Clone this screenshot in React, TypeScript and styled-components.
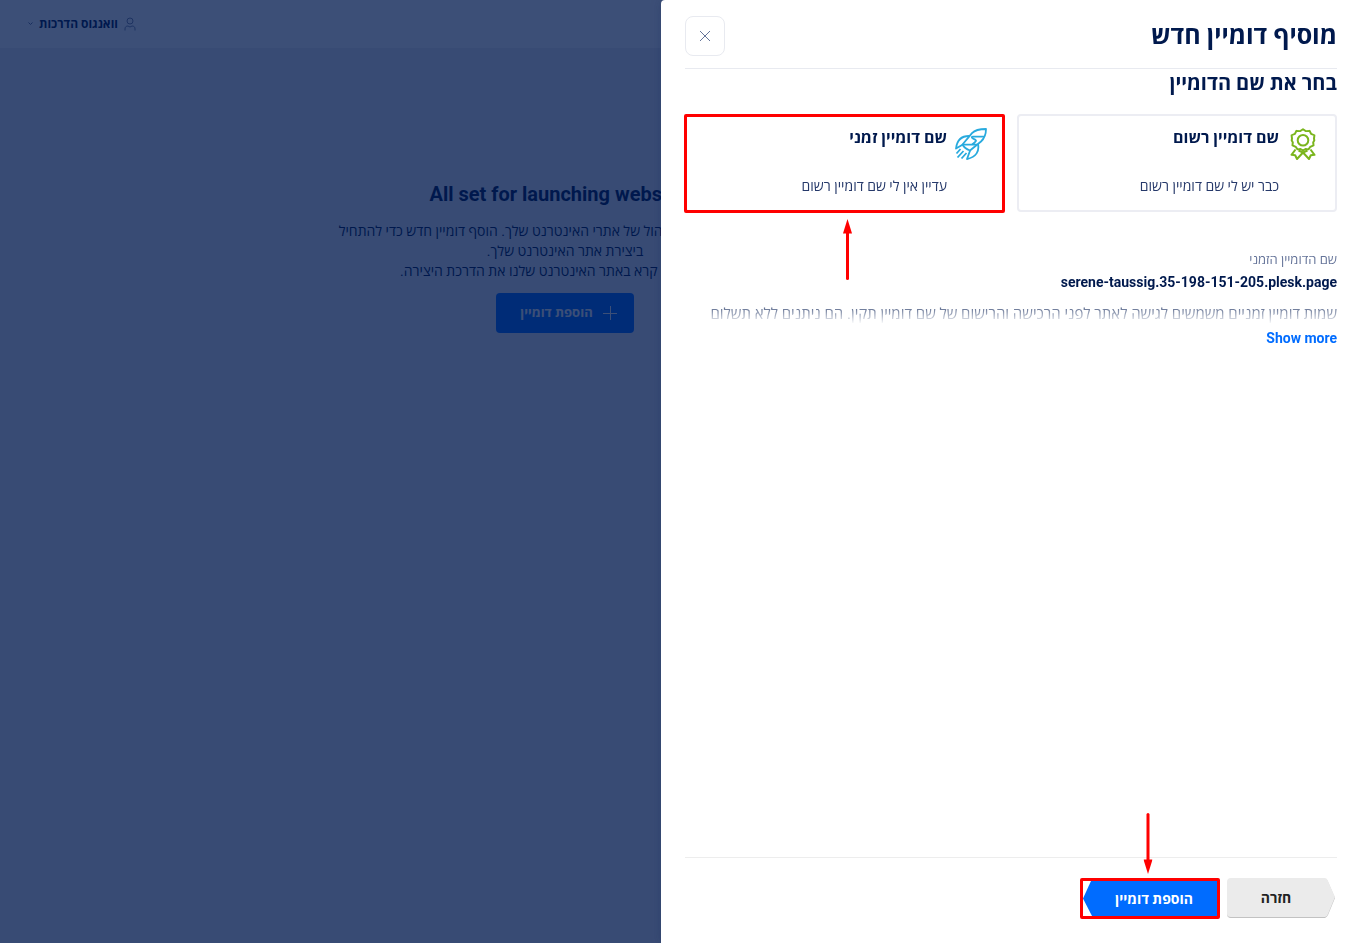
import React from "react";
import styled, { createGlobalStyle } from "styled-components";

const ink = "#00194d";
const red = "#ff0000";

const GlobalStyle = createGlobalStyle`
  * { box-sizing: border-box; }
  html, body, #root { height: 100%; }
  body {
    margin: 0;
    background: #eeeef2;
    color: ${ink};
    font-family: Roboto, "Open Sans", "Liberation Sans", sans-serif;
    font-size: 14px;
    line-height: 20px;
    overflow: hidden;
  }
  h1, h2, h3, p { margin: 0; }
  button { font: inherit; color: inherit; cursor: pointer; }
`;

const Page = styled.div`
  min-height: 100%;
  display: grid;
  grid-template-columns: 228px 1fr;
`;

const Sidebar = styled.aside`
  background: #ffffff;
`;

const TopBar = styled.header`
  display: flex;
  justify-content: flex-end;
  align-items: center;
  height: 48px;
  padding: 0 28px;
  background: #ffffff;
`;

const UserButton = styled.button`
  display: flex;
  align-items: center;
  gap: 6px;
  padding: 0;
  border: 0;
  background: none;
  font-size: 12px;
  font-weight: 700;
`;

const Intro = styled.section`
  display: flex;
  flex-direction: column;
  align-items: center;
  padding-top: 132px;
  text-align: center;
`;

const IntroTitle = styled.h2`
  font-size: 20px;
  line-height: 28px;
  font-weight: 700;
`;

const IntroText = styled.p`
  margin: 13px 0 12px;
  max-width: 480px;
`;

const IntroButton = styled.button`
  display: flex;
  align-items: center;
  gap: 10px;
  height: 40px;
  padding: 0 17px 0 24px;
  border: 0;
  border-radius: 4px;
  background: #006cff;
  color: #ffffff;
  font-size: 13px;
  font-weight: 700;
`;

const Backdrop = styled.div`
  position: fixed;
  inset: 0;
  background: rgba(0, 25, 77, 0.765);
`;

const Drawer = styled.div`
  position: fixed;
  top: 0;
  bottom: 0;
  right: 0;
  width: 697px;
  max-width: 100%;
  display: flex;
  flex-direction: column;
  padding: 0 21px 0 24px;
  border-top-left-radius: 4px;
  background: #ffffff;
  box-shadow: 0 0 12px rgba(0, 25, 77, 0.2);
`;

const DrawerHeader = styled.header`
  display: flex;
  justify-content: space-between;
  align-items: center;
  height: 69px;
  padding-top: 4px;
  border-bottom: 1px solid #e8eaf0;
`;

const DrawerTitle = styled.h1`
  font-size: 25px;
  line-height: 32px;
  font-weight: 700;
`;

const CloseButton = styled.button`
  display: flex;
  align-items: center;
  justify-content: center;
  width: 40px;
  height: 40px;
  padding: 0;
  border: 1px solid #e8eaf0;
  border-radius: 8px;
  background: #ffffff;
`;

const DrawerBody = styled.main`
  flex: 1;
`;

const SectionTitle = styled.h2`
  font-size: 20px;
  line-height: 28px;
  font-weight: 700;
`;

const Cards = styled.div`
  display: grid;
  grid-template-columns: 1fr 1fr;
  gap: 12px;
  margin-top: 17px;
`;

const Card = styled.button<{ $marked?: boolean }>`
  position: relative;
  display: flex;
  align-items: flex-start;
  gap: 8px;
  height: 98px;
  padding: 12px 16px;
  border: 2px solid #ecedf3;
  border-radius: 4px;
  background: #ffffff;
  text-align: start;

  &::after {
    content: "";
    display: ${(p) => (p.$marked ? "block" : "none")};
    position: absolute;
    inset: -2px -2px -3px -3px;
    border: 3px solid ${red};
    border-radius: 2px;
  }
`;

const CardText = styled.span`
  display: flex;
  flex-direction: column;
  gap: 28px;
`;

const CardTitle = styled.strong`
  font-size: 16px;
  line-height: 20px;
`;

const CardNote = styled.span`
  font-size: 14px;
  line-height: 20px;
  color: #26396a;
`;

const Pointer = styled.svg<{ $down?: boolean }>`
  position: absolute;
  left: 50%;
  margin-left: -2px;
  ${(p) => (p.$down ? "bottom: calc(100% + 7px);" : "top: calc(100% + 9px);")}
  transform: ${(p) => (p.$down ? "translateX(-50%) rotate(180deg)" : "none")};
`;

const FieldLabel = styled.p`
  margin-top: 38px;
  font-size: 13px;
  color: #66759a;
`;

const DomainName = styled.p`
  margin-top: 2px;
  font-weight: 700;
`;

const Hint = styled.p`
  margin-top: 12px;
  height: 20px;
  overflow: hidden;
  white-space: nowrap;
  font-size: 15px;
  color: #3d4f78;
  mask-image: linear-gradient(#000, transparent);
`;

const MoreLink = styled.a`
  display: inline-block;
  margin-top: 4px;
  color: #006cff;
  font-weight: 700;
  text-decoration: none;
`;

const DrawerFooter = styled.footer`
  display: flex;
  gap: 7px;
  padding: 20px 2px 24px;
  border-top: 1px solid #ededed;
`;

const BackButton = styled.button`
  position: relative;
  width: 98px;
  height: 40px;
  margin-right: 10px;
  padding: 0;
  border: 0;
  border-bottom: 1px solid #c2c2c2;
  border-radius: 4px 0 0 4px;
  background: #ebebeb;
  color: #222222;
  font-weight: 700;
`;

const BackTip = styled.svg`
  position: absolute;
  top: 0;
  left: 100%;
`;

const MarkedArea = styled.div`
  position: relative;
  width: 140px;
  height: 41px;
  border: 3px solid ${red};
  border-radius: 2px;
`;

const SubmitButton = styled.button`
  display: block;
  width: 100%;
  height: 100%;
  padding: 0 0 0 8px;
  border: 0;
  background: #006cff;
  color: #ffffff;
  font-weight: 700;
  clip-path: polygon(8px 0, 100% 0, 100% 100%, 9px 100%, 0 50%);
`;

function Arrow({ down }: { down?: boolean }) {
  return (
    <Pointer $down={down} width="9" height="61" viewBox="0 0 9 61" aria-hidden="true">
      <path d="M4.500 0L9 14.500H0z" fill={red} />
      <path d="M4.500 12V59.500" stroke={red} strokeWidth="3" strokeLinecap="round" />
    </Pointer>
  );
}

function AwardIcon() {
  return (
    <svg width="32" height="32" viewBox="0 0 32 32" fill="none" stroke="#7ab51d" strokeWidth="2" strokeLinejoin="round" aria-hidden="true">
      <path d="M16 1l3 2.200 3.600-.4 1.500 3.300 3.300 1.500-.4 3.500L27.300 13l-1.100 2.300.3 3.200-3.200 1.500-1.700 2.700-3.100-.3L16 24l-2.500-1.600-3.100.3L8.700 20l-3.200-1.500.3-3.200L4.700 13l.3-1.900-.4-3.500 3.300-1.500 1.500-3.300 3.600.4z" transform="translate(0 .2) scale(1 .93)" />
      <circle cx="16" cy="12.200" r="5.300" />
      <path d="M8.500 21.500L4.500 26.800l3.700.4L10 31l6-6.500 6 6.500 1.800-3.800 3.700-.4-4-5.300M11.500 22.500l4.500 2 4.500-2" />
    </svg>
  );
}

function RocketIcon() {
  return (
    <svg width="32" height="32" viewBox="0 0 32 32" fill="none" stroke="#28aade" strokeWidth="1.800" strokeLinejoin="round" aria-hidden="true">
      <path d="M31 1C25 1 20 2 17 5.200L7.500 16.500Q9.500 20.500 15 22.500L26 13.500C30 9.800 31 6 31 1z" />
      <path d="M14 8C7 8 2 12 1 20.500L7.500 16.700" />
      <path d="M23 16C24.500 23 21.500 29 12 31L15 22.800" />
      <path d="M29 8.700H18c-1.500 0-1.500 1-.5 1.500l3 1.700c1 .6.800 1.500-3.500 4.600M7.500 16.600H22" />
      <path d="M5.500 21L1.500 25.500M8.500 23L2.500 29.500M11.500 25L6.500 30.500" />
    </svg>
  );
}

export default function App() {
  return (
    <>
      <GlobalStyle />
      <Page dir="rtl">
        <Sidebar />
        <div>
          <TopBar>
            <UserButton>
              <svg width="12" height="14" viewBox="0 0 12 14" fill="none" stroke="#7a86a3" aria-hidden="true">
                <circle cx="6" cy="4" r="3" />
                <path d="M1 13.500V12c0-2 1-3 3-3l2 1 2-1c2 0 3 1 3 3v1.500" />
              </svg>
              וואנגוס הדרכות
              <svg width="5" height="4" viewBox="0 0 5 4" fill="none" stroke="#66759a" aria-hidden="true">
                <path d="M.5.500l2 2 2-2" />
              </svg>
            </UserButton>
          </TopBar>
          <Intro>
            <IntroTitle dir="ltr">All set for launching websites!</IntroTitle>
            <IntroText>
              כאן ניתן גם להתחיל בניהול של אתרי האינטרנט שלך. הוסף דומיין חדש כדי להתחיל
              <br />
              ביצירת אתר האינטרנט שלך.
              <br />
              לקבלת מידע קרא באתר האינטרנט שלנו את הדרכת היצירה.
            </IntroText>
            <IntroButton>
              <svg width="14" height="14" viewBox="0 0 14 14" stroke="#ffffff" aria-hidden="true">
                <path d="M7.500 0V14M0 7.500H14" />
              </svg>
              הוספת דומיין
            </IntroButton>
          </Intro>
        </div>
      </Page>
      <Backdrop />
      <Drawer dir="rtl" role="dialog" aria-labelledby="drawer-title">
        <DrawerHeader>
          <DrawerTitle id="drawer-title">מוסיף דומיין חדש</DrawerTitle>
          <CloseButton aria-label="סגירה">
            <svg width="12" height="12" viewBox="0 0 12 12" stroke="#66759a" aria-hidden="true">
              <path d="M1 1l10 10M11 1L1 11" />
            </svg>
          </CloseButton>
        </DrawerHeader>
        <DrawerBody>
          <SectionTitle>בחר את שם הדומיין</SectionTitle>
          <Cards>
            <Card>
              <AwardIcon />
              <CardText>
                <CardTitle>שם דומיין רשום</CardTitle>
                <CardNote>כבר יש לי שם דומיין רשום</CardNote>
              </CardText>
            </Card>
            <Card $marked>
              <RocketIcon />
              <CardText>
                <CardTitle>שם דומיין זמני</CardTitle>
                <CardNote>עדיין אין לי שם דומיין רשום</CardNote>
              </CardText>
              <Arrow />
            </Card>
          </Cards>
          <FieldLabel>שם הדומיין הזמני</FieldLabel>
          <DomainName>serene-taussig.35-198-151-205.plesk.page</DomainName>
          <Hint>שמות דומיין זמניים משמשים לגישה לאתר לפני הרכישה והרישום של שם דומיין תקין. הם ניתנים ללא תשלום</Hint>
          <MoreLink href="#more">Show more</MoreLink>
        </DrawerBody>
        <DrawerFooter>
          <BackButton>
            חזרה
            <BackTip width="10" height="40" viewBox="0 0 10 40" aria-hidden="true">
              <path d="M0 1Q2 2 3 4L10 20 3 37Q2 39 0 40z" fill="#c2c2c2" />
              <path d="M0 0Q2 0 3 3L10 19 3 36Q2 39 0 39z" fill="#ebebeb" />
            </BackTip>
          </BackButton>
          <MarkedArea>
            <SubmitButton>הוספת דומיין</SubmitButton>
            <Arrow down />
          </MarkedArea>
        </DrawerFooter>
      </Drawer>
    </>
  );
}
